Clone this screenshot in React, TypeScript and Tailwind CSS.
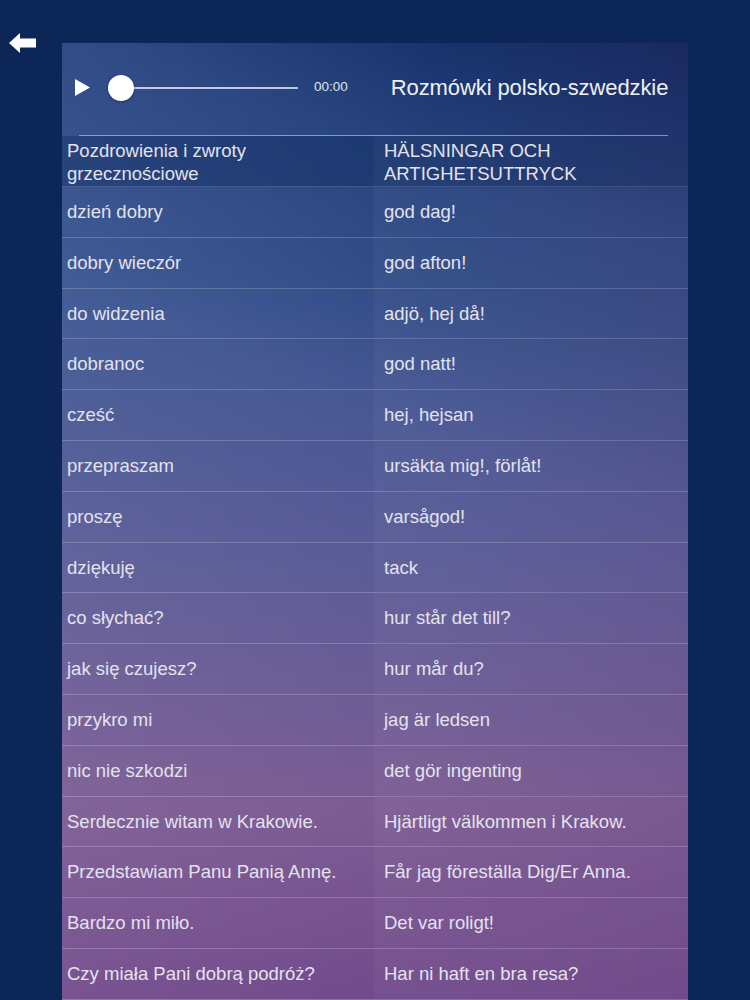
import React from "react";

const rows: [string, string][] = [
    ["dzień dobry", "god dag!"],
    ["dobry wieczór", "god afton!"],
    ["do widzenia", "adjö, hej då!"],
    ["dobranoc", "god natt!"],
    ["cześć", "hej, hejsan"],
    ["przepraszam", "ursäkta mig!, förlåt!"],
    ["proszę", "varsågod!"],
    ["dziękuję", "tack"],
    ["co słychać?", "hur står det till?"],
    ["jak się czujesz?", "hur mår du?"],
    ["przykro mi", "jag är ledsen"],
    ["nic nie szkodzi", "det gör ingenting"],
    ["Serdecznie witam w Krakowie.", "Hjärtligt välkommen i Krakow."],
    ["Przedstawiam Panu Panią Annę.", "Får jag föreställa Dig/Er Anna."],
    ["Bardzo mi miło.", "Det var roligt!"],
    ["Czy miała Pani dobrą podróż?", "Har ni haft en bra resa?"],
];

function BackArrow() {
    return (
        <svg width="28" height="20" viewBox="0 0 28 20" className="fill-white">
            <path d="M0 10 L11 0 L11 5.5 L27 5.5 L27 14.5 L11 14.5 L11 20 Z" />
        </svg>
    );
}

export default function App() {
    return (
        <div
            className="w-[750px] h-[1000px] overflow-hidden bg-[#0b2657] relative text-[#e4e2ee]"
            style={{ fontFamily: '"Liberation Sans", Arial, sans-serif' }}
        >
            <button className="absolute left-[9px] top-[33px]">
                <BackArrow />
            </button>

            <div className="absolute left-[62px] top-[43px] w-[626px] h-[957px] overflow-hidden bg-[linear-gradient(180deg,#2f4e90_0%,#36528f_25%,#5a5a96_55%,#7b5a92_80%,#70488a_100%)]">
                {/* right side darkening */}
                <div className="absolute inset-0 bg-[linear-gradient(200deg,rgba(10,35,85,0.85)_0%,rgba(10,35,85,0.3)_18%,rgba(10,35,85,0)_40%)] pointer-events-none" />
                <div className="absolute inset-0 bg-[linear-gradient(90deg,rgba(255,255,255,0.06)_0%,rgba(255,255,255,0)_60%,rgba(80,40,110,0.15)_100%)] pointer-events-none" />

                <div className="relative">
                    {/* player header */}
                    <div className="h-[92px] flex items-center pl-[13px] pb-[3px]">
                        <svg width="16" height="17" viewBox="0 0 16 17" className="fill-white mr-[17px]">
                            <path d="M0 0 L15 8.5 L0 17 Z" />
                        </svg>
                        <div className="relative w-[190px] h-[26px] flex items-center">
                            <div className="absolute left-[13px] right-0 h-[2px] bg-white/70" />
                            <div className="w-[26px] h-[26px] rounded-full bg-white shadow-[0_1px_3px_rgba(0,0,0,0.35)] relative" />
                        </div>
                        <span className="ml-[16px] text-[13.5px] text-white/85">00:00</span>
                        <span className="ml-[43px] text-[22px] text-[#eef0f6] tracking-[-0.1px]">
                            Rozmówki polsko-szwedzkie
                        </span>
                    </div>
                    <div className="ml-[17px] w-[589px] h-[1px] bg-white/45" />

                    {/* section header */}
                    <div className="grid grid-cols-[312px_314px] h-[51px] bg-[#0a2458]/35 border-b border-white/15">
                        <div className="pl-[5px] pr-[50px] pt-[3px] text-[18.5px] leading-[23px]">
                            Pozdrowienia i zwroty grzecznościowe
                        </div>
                        <div className="pl-[10px] pt-[3px] text-[18.5px] leading-[23px] bg-white/[0.03]">
                            HÄLSNINGAR OCH ARTIGHETSUTTRYCK
                        </div>
                    </div>

                    {rows.map(([pl, sv], i) => (
                        <div
                            key={i}
                            className="grid grid-cols-[312px_314px] h-[50.8px] border-b border-white/20"
                        >
                            <div className="pl-[5px] flex items-center text-[18.5px] whitespace-nowrap">{pl}</div>
                            <div className="pl-[10px] flex items-center text-[18.5px] whitespace-nowrap bg-white/[0.04]">
                                {sv}
                            </div>
                        </div>
                    ))}
                </div>
            </div>
        </div>
    );
}
